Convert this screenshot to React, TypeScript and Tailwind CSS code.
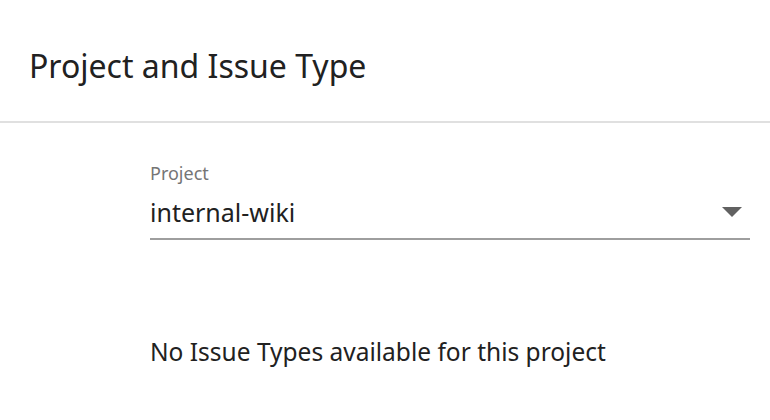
export default function App() {
  return (
    <div className="w-[770px] h-[420px] bg-white text-[#212121] overflow-hidden" style={{ fontFamily: "'Noto Sans', sans-serif" }}>
      <div className="h-[123px] border-b-2 border-[#e0e0e0] pl-[29px] pt-[44px]">
        <h1 className="text-[32px] leading-[44px] font-normal">Project and Issue Type</h1>
      </div>
      <div className="pl-[150px] pr-[20px]">
        <div className="pt-[37px]">
          <label className="block text-[18px] leading-[26px] text-[#757575]">Project</label>
          <div className="flex items-center justify-between h-[54px] border-b-2 border-[#9e9e9e]">
            <span className="text-[25px] leading-[32px]">internal-wiki</span>
            <svg width="20" height="10" viewBox="0 0 20 10" className="mr-[8px]">
              <path d="M0 0 L20 0 L10 10 Z" fill="#616161" />
            </svg>
          </div>
        </div>
        <p className="mt-[96px] text-[24.5px] leading-[32px]">No Issue Types available for this project</p>
      </div>
    </div>
  );
}
